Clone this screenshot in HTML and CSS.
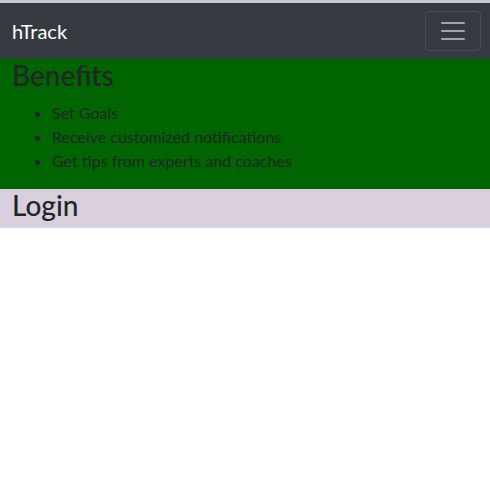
FILE: index.html
```html
<!DOCTYPE html>
<html lang="en">
<head>
<meta charset="utf-8">
<title>hTrack</title>
<link rel="stylesheet" href="styles.css">
</head>
<body>
<div class="topline"></div>
<nav class="navbar">
  <a class="brand" href="#">hTrack</a>
  <button class="toggler" type="button" aria-label="Toggle navigation">
    <svg width="30" height="30" viewBox="0 0 30 30"><path d="M4 7h22M4 15h22M4 23h22" stroke="rgba(255,255,255,0.55)" stroke-width="2" stroke-linecap="round" fill="none"/></svg>
  </button>
</nav>
<section class="benefits">
  <h3 class="title">Benefits</h3>
  <ul class="list">
    <li>Set Goals</li>
    <li>Receive customized notifications</li>
    <li>Get tips from experts and coaches</li>
  </ul>
</section>
<section class="login">
  <h3 class="title">Login</h3>
</section>
</body>
</html>
```
FILE: styles.css
```css
* { box-sizing: border-box; }
body {
  margin: 0;
  font-family: "Lato", "Open Sans", sans-serif;
  font-size: 16px;
  line-height: 1.5;
  color: #212529;
  background: #fff;
}
.topline { height: 3px; background: #c9cacc; }
.navbar {
  height: 56px;
  background: #343a40;
  display: flex;
  align-items: center;
  justify-content: space-between;
  padding: 0 9px 0 12px;
}
.brand {
  color: #fff;
  text-decoration: none;
  font-size: 20px;
  line-height: 30px;
}
.toggler {
  width: 56px;
  height: 40px;
  display: flex;
  align-items: center;
  justify-content: center;
  background: transparent;
  border: 1px solid rgba(255,255,255,0.1);
  border-radius: 4px;
  padding: 0;
}
.benefits {
  background: #006400;
  padding: 0 12px 16px;
}
.login {
  background: #dacfdc;
  padding: 0 12px 6px;
}
.title {
  margin: 0 0 0;
  font-size: 28px;
  font-weight: 500;
  line-height: 1.2;
}
.benefits .title { margin-bottom: 8px; }
.list {
  margin: 0;
  padding-left: 40px;
}
```
